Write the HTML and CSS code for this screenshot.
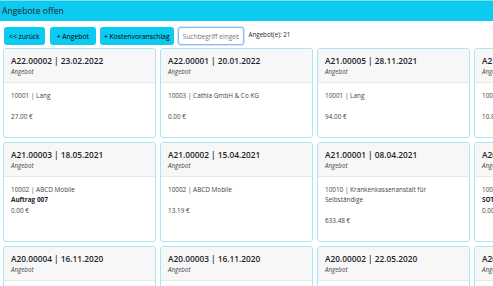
FILE: index.html
```html
<!DOCTYPE html>
<html lang="de">
<head>
  <meta charset="UTF-8" />
  <title>Angebote offen</title>
  <link rel="stylesheet" href="styles.css">
</head>
<body>

  <div class="topbar">Angebote offen</div>

  <div class="toolbar">
    <button class="btn">&lt;&lt; zurück</button>
    <button class="btn btn-new">+ Angebot</button>
    <button class="btn btn-kv">+ Kostenvoranschlag</button>
    <input type="text" class="search" placeholder="Suchbegriff eingeben" />
    <span class="count">Angebot(e): 21</span>
  </div>

  <!-- Offer cards -->
  <div class="cards">
    <div class="card">
      <div class="card-header">
        <div class="card-title">A22.00002 | 23.02.2022</div>
        <div class="card-type">Angebot</div>
      </div>
      <div class="card-body">
        <div class="line">10001 | Lang</div>
        <div class="line name"></div>
        <div class="line">27.00 €</div>
      </div>
    </div>

    <div class="card">
      <div class="card-header">
        <div class="card-title">A22.00001 | 20.01.2022</div>
        <div class="card-type">Angebot</div>
      </div>
      <div class="card-body">
        <div class="line">10003 | Cathia GmbH &amp; Co KG</div>
        <div class="line name"></div>
        <div class="line">0.00 €</div>
      </div>
    </div>

    <div class="card">
      <div class="card-header">
        <div class="card-title">A21.00005 | 28.11.2021</div>
        <div class="card-type">Angebot</div>
      </div>
      <div class="card-body">
        <div class="line">10001 | Lang</div>
        <div class="line name"></div>
        <div class="line">94.00 €</div>
      </div>
    </div>

    <div class="card">
      <div class="card-header">
        <div class="card-title">A21.00004 | 14.09.2021</div>
        <div class="card-type">Angebot</div>
      </div>
      <div class="card-body">
        <div class="line">10005 | Meier</div>
        <div class="line name"></div>
        <div class="line">10.85 €</div>
      </div>
    </div>

    <div class="card">
      <div class="card-header">
        <div class="card-title">A21.00003 | 18.05.2021</div>
        <div class="card-type">Angebot</div>
      </div>
      <div class="card-body">
        <div class="line">10002 | ABCD Mobile</div>
        <div class="line name">Auftrag 007</div>
        <div class="line">0.00 €</div>
      </div>
    </div>

    <div class="card">
      <div class="card-header">
        <div class="card-title">A21.00002 | 15.04.2021</div>
        <div class="card-type">Angebot</div>
      </div>
      <div class="card-body">
        <div class="line">10002 | ABCD Mobile</div>
        <div class="line name"></div>
        <div class="line">13.19 €</div>
      </div>
    </div>

    <div class="card">
      <div class="card-header">
        <div class="card-title">A21.00001 | 08.04.2021</div>
        <div class="card-type">Angebot</div>
      </div>
      <div class="card-body">
        <div class="line">10010 | Krankenkassenanstalt für Selbständige</div>
        <div class="line name"></div>
        <div class="line">633.48 €</div>
      </div>
    </div>

    <div class="card">
      <div class="card-header">
        <div class="card-title">A20.00005 | 02.12.2020</div>
        <div class="card-type">Angebot</div>
      </div>
      <div class="card-body">
        <div class="line">10004 | Sotronik GmbH</div>
        <div class="line name">SOTRONIK</div>
        <div class="line">0.00 €</div>
      </div>
    </div>

    <div class="card">
      <div class="card-header">
        <div class="card-title">A20.00004 | 16.11.2020</div>
        <div class="card-type">Angebot</div>
      </div>
      <div class="card-body">
        <div class="line">10001 | Lang</div>
        <div class="line name"></div>
        <div class="line">0.00 €</div>
      </div>
    </div>

    <div class="card">
      <div class="card-header">
        <div class="card-title">A20.00003 | 16.11.2020</div>
        <div class="card-type">Angebot</div>
      </div>
      <div class="card-body">
        <div class="line">10001 | Lang</div>
        <div class="line name"></div>
        <div class="line">0.00 €</div>
      </div>
    </div>

    <div class="card">
      <div class="card-header">
        <div class="card-title">A20.00002 | 22.05.2020</div>
        <div class="card-type">Angebot</div>
      </div>
      <div class="card-body">
        <div class="line">10002 | ABCD Mobile</div>
        <div class="line name"></div>
        <div class="line">0.00 €</div>
      </div>
    </div>

    <div class="card">
      <div class="card-header">
        <div class="card-title">A20.00001 | 11.05.2020</div>
        <div class="card-type">Angebot</div>
      </div>
      <div class="card-body">
        <div class="line">10003 | Cathia GmbH &amp; Co KG</div>
        <div class="line name"></div>
        <div class="line">0.00 €</div>
      </div>
    </div>
  </div>

</body>
</html>
```

FILE: styles.css
```css
body {
  margin: 0;
  font-family: "Open Sans", Arial, sans-serif;
  color: #212529;
  background: #fff;
  overflow: hidden;
}

.topbar {
  height: 20px;
  line-height: 20px;
  padding: 0 2px;
  font-size: 8.6px;
  background-color: #0dcaf0;
  border-top: 1px solid #7fe0f5;
}

.toolbar {
  display: flex;
  align-items: center;
  gap: 4px;
  padding: 6px 4px 0;
}

.btn {
  height: 18px;
  padding: 0 5px;
  font-family: inherit;
  font-size: 6.8px;
  color: #000;
  background-color: #0dcaf0;
  border: none;
  border-radius: 3px;
}

.btn-new {
  margin-left: 1px;
  padding: 0 7px;
}

.btn-kv {
  padding: 0 4px;
}

.search {
  box-sizing: border-box;
  width: 66px;
  height: 18px;
  padding: 0 4px;
  font-family: inherit;
  font-size: 6.6px;
  border: 1px solid #86b7fe;
  border-radius: 3px;
  box-shadow: 0 0 0 1px #d6e6fd;
}

.search::placeholder {
  color: #777;
}

.count {
  margin-left: 1px;
  margin-top: -3px;
  font-size: 6.2px;
}

.cards {
  display: grid;
  grid-template-columns: repeat(4, 153px);
  gap: 4px;
  padding: 3px 3px 0;
}

.card {
  border: 1px solid #a8e8f5;
  border-radius: 3px;
  background: #fff;
  overflow: hidden;
}

.card-header {
  padding: 5px 7px;
  background-color: #f7f7f7;
  border-bottom: 1px solid #e8e8e8;
}

.card-title {
  font-size: 8.3px;
  line-height: 13px;
  font-weight: 600;
}

.card-type {
  font-size: 6.2px;
  line-height: 10px;
  font-style: italic;
  color: #444;
}

.card-body {
  padding: 8px 7px 14px;
  font-size: 6.4px;
  color: #444;
}

.line {
  line-height: 10.5px;
  min-height: 10.5px;
}

.name {
  font-weight: 700;
  color: #212529;
}
```
